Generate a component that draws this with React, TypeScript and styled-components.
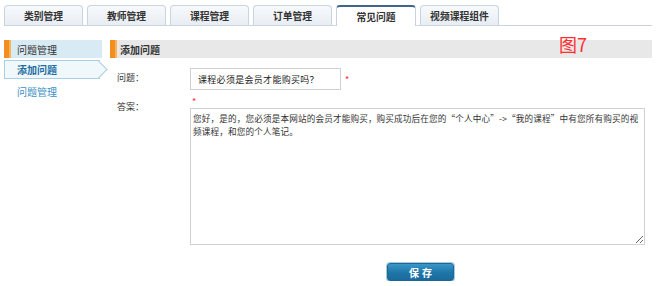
import React, { useState } from 'react';
import styled, { createGlobalStyle } from 'styled-components';

const GlobalStyle = createGlobalStyle`
  body {
    margin: 0;
    background: white;
    font-family: "Noto Sans CJK SC", "Liberation Sans", sans-serif;
    color: #333;
  }
`;

const Page = styled.div`
  width: 660px;
  padding: 4px 8px 0 4px;
  box-sizing: border-box;
`;

const TabBar = styled.div`
  display: flex;
  gap: 4px;
  height: 21px;
  border-bottom: 1px solid #c9d6e2;
`;

const Tab = styled.div<{ $active?: boolean }>`
  width: ${(p) => (p.$active ? 80 : 79)}px;
  height: ${(p) => (p.$active ? 21 : 20)}px;
  box-sizing: border-box;
  display: flex;
  align-items: center;
  justify-content: center;
  font-size: 9.8px;
  font-weight: bold;
  color: #333;
  border: 1px solid #c8d4df;
  border-bottom: none;
  border-top: ${(p) => (p.$active ? '2px solid #3f6589' : '1px solid #c8d4df')};
  border-radius: 4px 4px 0 0;
  background: ${(p) =>
    p.$active ? '#fff' : 'linear-gradient(#f8fafc, #e7edf3)'};
  margin-bottom: ${(p) => (p.$active ? '-1px' : '0')};
  align-self: flex-end;
`;

const Body = styled.div`
  display: flex;
  gap: 8px;
  margin-top: 14px;
`;

const Sidebar = styled.div`
  width: 98px;
  flex-shrink: 0;
  display: flex;
  flex-direction: column;
`;

const BarHeader = styled.div<{ $bg: string }>`
  height: 18px;
  display: flex;
  align-items: center;
  background: ${(p) => p.$bg};
  font-size: 10px;
  border-left: 5px solid #f28f1f;
  box-shadow: inset 2px 0 0 #f8b45c;
`;

const SideTitle = styled.span`
  padding-left: 8px;
  color: #333;
`;

const MainTitle = styled.span`
  padding-left: 5px;
  font-weight: bold;
  color: #333;
`;

const ActiveItem = styled.div`
  position: relative;
  margin-top: 2px;
  height: 19px;
  width: 96px;
  box-sizing: border-box;
  border: 1px solid #a9cfe5;
  border-right: none;
  background: #f1f8fc;
  display: flex;
  align-items: center;
  padding-left: 12px;
  font-size: 10px;
  font-weight: bold;
  color: #1c6ea4;

  &::after {
    content: '';
    position: absolute;
    top: 2px;
    right: -5px;
    width: 12px;
    height: 12px;
    background: #f1f8fc;
    border-top: 1px solid #a9cfe5;
    border-right: 1px solid #a9cfe5;
    transform: rotate(45deg);
  }
`;

const SideLink = styled.div`
  padding: 5px 0 0 13px;
  font-size: 10px;
  color: #3a90c5;
`;

const Main = styled.div`
  position: relative;
  flex: 1;
  display: flex;
  flex-direction: column;
`;

const Figure = styled.div`
  position: absolute;
  left: 449px;
  top: -9px;
  font-size: 18px;
  color: #ff3030;
`;

const Form = styled.div`
  display: grid;
  grid-template-columns: 73px auto;
  padding-left: 7px;
  margin-top: 10px;
  font-size: 9px;
`;

const Label = styled.div<{ $top: number }>`
  padding-top: ${(p) => p.$top}px;
  color: #333;
  font-family: "Noto Sans CJK TC", "Noto Sans CJK SC", sans-serif;
`;

const Field = styled.div`
  display: flex;
  align-items: center;
  gap: 4px;
`;

const Input = styled.input`
  width: 151px;
  height: 22px;
  box-sizing: border-box;
  border: 1px solid #d0d0d0;
  padding: 0 7px;
  font-family: inherit;
  font-size: 9px;
  letter-spacing: 0.3px;
  color: #222;
  outline: none;
`;

const Star = styled.span`
  color: #f23;
  font-size: 9px;
`;

const AnswerField = styled.div`
  display: flex;
  flex-direction: column;
  padding-top: 6px;
`;

const AnswerStar = styled(Star)`
  padding-left: 2px;
  line-height: 12px;
`;

const TextArea = styled.textarea`
  width: 455px;
  height: 137px;
  box-sizing: border-box;
  border: 1px solid #d2d2d2;
  padding: 3px 1px 3px 2px;
  font-family: inherit;
  font-size: 8.6px;
  letter-spacing: 0.15px;
  line-height: 13px;
  color: #333;
  outline: none;
`;

const Actions = styled.div`
  grid-column: 2;
  padding: 18px 0 0 197px;
`;

const SaveButton = styled.button`
  width: 67px;
  height: 18px;
  border: 1px solid #1d6796;
  border-radius: 3px;
  background: linear-gradient(#3a97c8, #1f75a8 55%, #1a6a9c);
  color: white;
  font-family: inherit;
  font-size: 10px;
  font-weight: bold;
  letter-spacing: 3px;
  padding: 0 0 0 3px;
  cursor: pointer;
  box-shadow: 0 0 0 1px #a9cbe0;
`;

const tabs = ['类别管理', '教师管理', '课程管理', '订单管理', '常见问题', '视频课程组件'];

export default function App() {
  const [question, setQuestion] = useState('课程必须是会员才能购买吗？');
  const [answer, setAnswer] = useState(
    '您好，是的，您必须是本网站的会员才能购买，购买成功后在您的“个人中心”->“我的课程”中有您所有购买的视频课程，和您的个人笔记。'
  );

  return (
    <>
      <GlobalStyle />
      <Page lang="zh-CN">
        <TabBar>
          {tabs.map((t) => (
            <Tab key={t} $active={t === '常见问题'}>
              {t}
            </Tab>
          ))}
        </TabBar>

        <Body>
          <Sidebar>
            <BarHeader $bg="#d8eaf4">
              <SideTitle>问题管理</SideTitle>
            </BarHeader>
            <ActiveItem>添加问题</ActiveItem>
            <SideLink>问题管理</SideLink>
          </Sidebar>

          <Main>
            <Figure>图7</Figure>
            <BarHeader $bg="#e8e8e8">
              <MainTitle>添加问题</MainTitle>
            </BarHeader>

            <Form>
              <Label $top={3}>问题：</Label>
              <Field>
                <Input value={question} onChange={(e) => setQuestion(e.target.value)} />
                <Star>*</Star>
              </Field>

              <Label $top={10}>答案：</Label>
              <AnswerField>
                <AnswerStar>*</AnswerStar>
                <TextArea value={answer} onChange={(e) => setAnswer(e.target.value)} />
              </AnswerField>

              <Actions>
                <SaveButton>保存</SaveButton>
              </Actions>
            </Form>
          </Main>
        </Body>
      </Page>
    </>
  );
}
